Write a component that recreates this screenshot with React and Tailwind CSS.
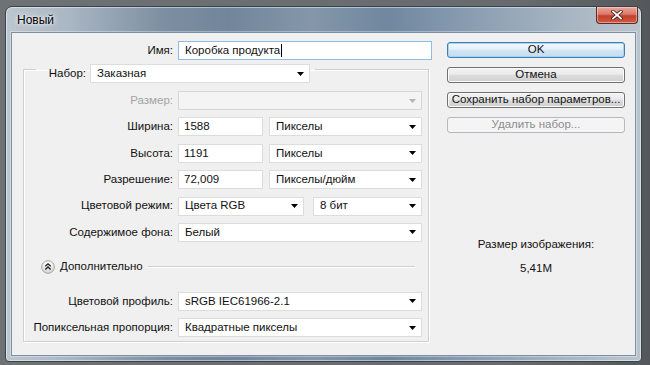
import React from "react";

function Arrow({ disabled }) {
  return (
    <svg width="7" height="4" viewBox="0 0 7 4" className="shrink-0">
      <path d="M0 0h7L3.5 4z" fill={disabled ? "#b4b4b4" : "#000"} />
    </svg>
  );
}

function Select({ value, w, disabled }) {
  return (
    <div
      className={`flex h-[19px] items-center justify-between border pl-[6px] pr-[5px] ${w} ${
        disabled ? "border-[#d6d6d6] bg-[#f4f4f4]" : "border-[#dcdcdc] bg-white"
      }`}
    >
      <span className="whitespace-nowrap leading-none">{value}</span>
      <Arrow disabled={disabled} />
    </div>
  );
}

function Input({ value, w }) {
  return (
    <div className={`flex h-[19px] items-center border border-[#dcdcdc] bg-white pl-[5px] ${w}`}>
      <span className="leading-none">{value}</span>
    </div>
  );
}

function Row({ label, children, disabled }) {
  return (
    <div className="flex h-[19px] items-center">
      <div
        className={`w-[154px] whitespace-nowrap pr-[5px] text-right ${disabled ? "text-[#a3a3a3]" : "text-[#111]"}`}
      >
        {label}
      </div>
      <div className="flex items-center">{children}</div>
    </div>
  );
}

function Btn({ children, primary, disabled }) {
  let cls;
  if (disabled) {
    cls = "border-[#b5b9bd] bg-[#f4f4f4] text-[#8c8c8c]";
  } else if (primary) {
    cls =
      "border-[#3c7fb1] bg-[linear-gradient(to_bottom,#f2f8fc_0%,#e6f0f8_45%,#d3e5f3_50%,#c4dcef_100%)] text-[#111] shadow-[inset_0_0_0_1px_#a7d3f5]";
  } else {
    cls =
      "border-[#707070] bg-[linear-gradient(to_bottom,#f2f2f2_0%,#ebebeb_45%,#dddddd_50%,#cfcfcf_100%)] text-[#111] shadow-[inset_0_0_0_1px_#fbfbfb]";
  }
  return (
    <div
      className={`flex h-[16px] w-[178px] items-center justify-center whitespace-nowrap rounded-[3px] border leading-none ${cls}`}
    >
      {children}
    </div>
  );
}

export default function App() {
  return (
    <div className="h-[365px] w-[650px] overflow-hidden bg-[linear-gradient(to_right,#6f7275,#686b6e_80%,#55585b)] font-['Liberation_Sans',Arial,sans-serif] text-[11.5px] text-[#111]">
      <div className="ml-[5px] mt-[6px] flex h-[356px] w-[637px] flex-col rounded-t-[7px] rounded-b-[4px] border border-[#39434e] bg-[linear-gradient(to_right,#bcc6cf_0%,#a9b6c3_10%,#7c8ea1_25%,#71869b_35%,#8497aa_48%,#6f879f_60%,#879bb0_72%,#a7b5c2_88%,#bac4cd_100%)] px-[5px] pb-[5px] shadow-[inset_0_0_0_1px_rgba(255,255,255,0.45)]">
        <div className="flex h-[25px] items-start justify-between">
          <div className="flex h-[25px] items-center pl-[6px] pt-[1px] text-[12px] text-black [text-shadow:0_0_6px_#fff,0_0_3px_#fff]">
            Новый
          </div>
          <div className="-mr-[2px] flex h-[17px] w-[42px] items-center justify-center rounded-b-[4px] border border-t-0 border-[#5b2b24] bg-[linear-gradient(to_bottom,#e9a99c_0%,#d9786a_45%,#c4402c_55%,#d05a44_100%)] shadow-[inset_0_0_0_1px_rgba(255,220,210,0.5)]">
            <svg width="12" height="10" viewBox="0 0 12 10">
              <path d="M2 1.5l8 7M10 1.5l-8 7" stroke="#3d1a14" strokeWidth="3.4" strokeLinecap="square" />
              <path d="M2 1.5l8 7M10 1.5l-8 7" stroke="#fff" strokeWidth="1.8" strokeLinecap="square" />
            </svg>
          </div>
        </div>
        <div className="flex flex-1 border border-[#7d8fa2] bg-[#f0f0f0] shadow-[0_0_0_1px_rgba(255,255,255,0.35)]">
          {/* left column */}
          <div className="flex flex-col">
            <div className="mt-[8px] flex h-[19px] items-center">
              <div className="w-[166px] pr-[5px] text-right">Имя:</div>
              <div className="flex h-[19px] w-[254px] items-center border border-[#8fbce6] bg-white pl-[6px]">
                <span className="leading-none">Коробка продукта</span>
                <span className="ml-[1px] h-[13px] w-[1px] bg-black" />
              </div>
            </div>
            <fieldset className="-mt-[4px] ml-[11px] w-[406px] border border-[#d0d0d0] pb-[4px] shadow-[inset_1px_1px_0_#fff,1px_1px_0_#fff]">
              <legend className="ml-[12px] pt-[8px]">
                <div className="flex items-center pr-[5px]">
                  <div className="w-[54px] pr-[4px] text-right">Набор:</div>
                  <Select value="Заказная" w="w-[220px]" />
                </div>
              </legend>
              <div className="mt-[8px] flex flex-col gap-[7.4px]">
                <Row label="Размер:" disabled>
                  <Select value="" w="w-[244px]" disabled />
                </Row>
                <Row label="Ширина:">
                  <Input value="1588" w="w-[85px]" />
                  <div className="ml-[6px]">
                    <Select value="Пикселы" w="w-[153px]" />
                  </div>
                </Row>
                <Row label="Высота:">
                  <Input value="1191" w="w-[85px]" />
                  <div className="ml-[6px]">
                    <Select value="Пикселы" w="w-[153px]" />
                  </div>
                </Row>
                <Row label="Разрешение:">
                  <Input value="72,009" w="w-[85px]" />
                  <div className="ml-[6px]">
                    <Select value="Пикселы/дюйм" w="w-[153px]" />
                  </div>
                </Row>
                <Row label="Цветовой режим:">
                  <Select value="Цвета RGB" w="w-[126px]" />
                  <div className="ml-[9px]">
                    <Select value="8 бит" w="w-[109px]" />
                  </div>
                </Row>
                <Row label="Содержимое фона:">
                  <Select value="Белый" w="w-[244px]" />
                </Row>
              </div>
              <div className="mt-[15px] flex h-[20px] items-center">
                <div className="ml-[17px] flex h-[14px] w-[14px] items-center justify-center">
                  <svg width="14" height="14" viewBox="0 0 14 14">
                    <defs>
                      <linearGradient id="cg" x1="0" y1="0" x2="0" y2="1">
                        <stop offset="0" stopColor="#ffffff" />
                        <stop offset="1" stopColor="#d4d4d4" />
                      </linearGradient>
                    </defs>
                    <circle cx="7" cy="7" r="6.3" fill="url(#cg)" stroke="#9a9a9a" strokeWidth="0.9" />
                    <path d="M4.3 6.3L7 3.8l2.7 2.5M4.3 9.5L7 7l2.7 2.5" fill="none" stroke="#222" strokeWidth="1.3" />
                  </svg>
                </div>
                <div className="ml-[5px]">Дополнительно</div>
                <div className="ml-[5px] mr-[13px] h-[2px] flex-1 border-t border-b border-t-[#cfcfcf] border-b-white" />
              </div>
              <div className="mt-[15px] flex flex-col gap-[7.4px]">
                <Row label="Цветовой профиль:">
                  <Select value="sRGB IEC61966-2.1" w="w-[244px]" />
                </Row>
                <Row label="Попиксельная пропорция:">
                  <Select value="Квадратные пикселы" w="w-[244px]" />
                </Row>
              </div>
            </fieldset>
          </div>
          {/* right column */}
          <div className="ml-[15px] flex w-[178px] flex-col">
            <div className="mt-[9px] flex flex-col gap-[9px]">
              <Btn primary>OK</Btn>
              <Btn>Отмена</Btn>
              <Btn>Сохранить набор параметров...</Btn>
              <Btn disabled>Удалить набор...</Btn>
            </div>
            <div className="mt-[104px] text-center leading-[14px]">Размер изображения:</div>
            <div className="mt-[10px] text-center leading-[14px]">5,41M</div>
          </div>
        </div>
      </div>
    </div>
  );
}
